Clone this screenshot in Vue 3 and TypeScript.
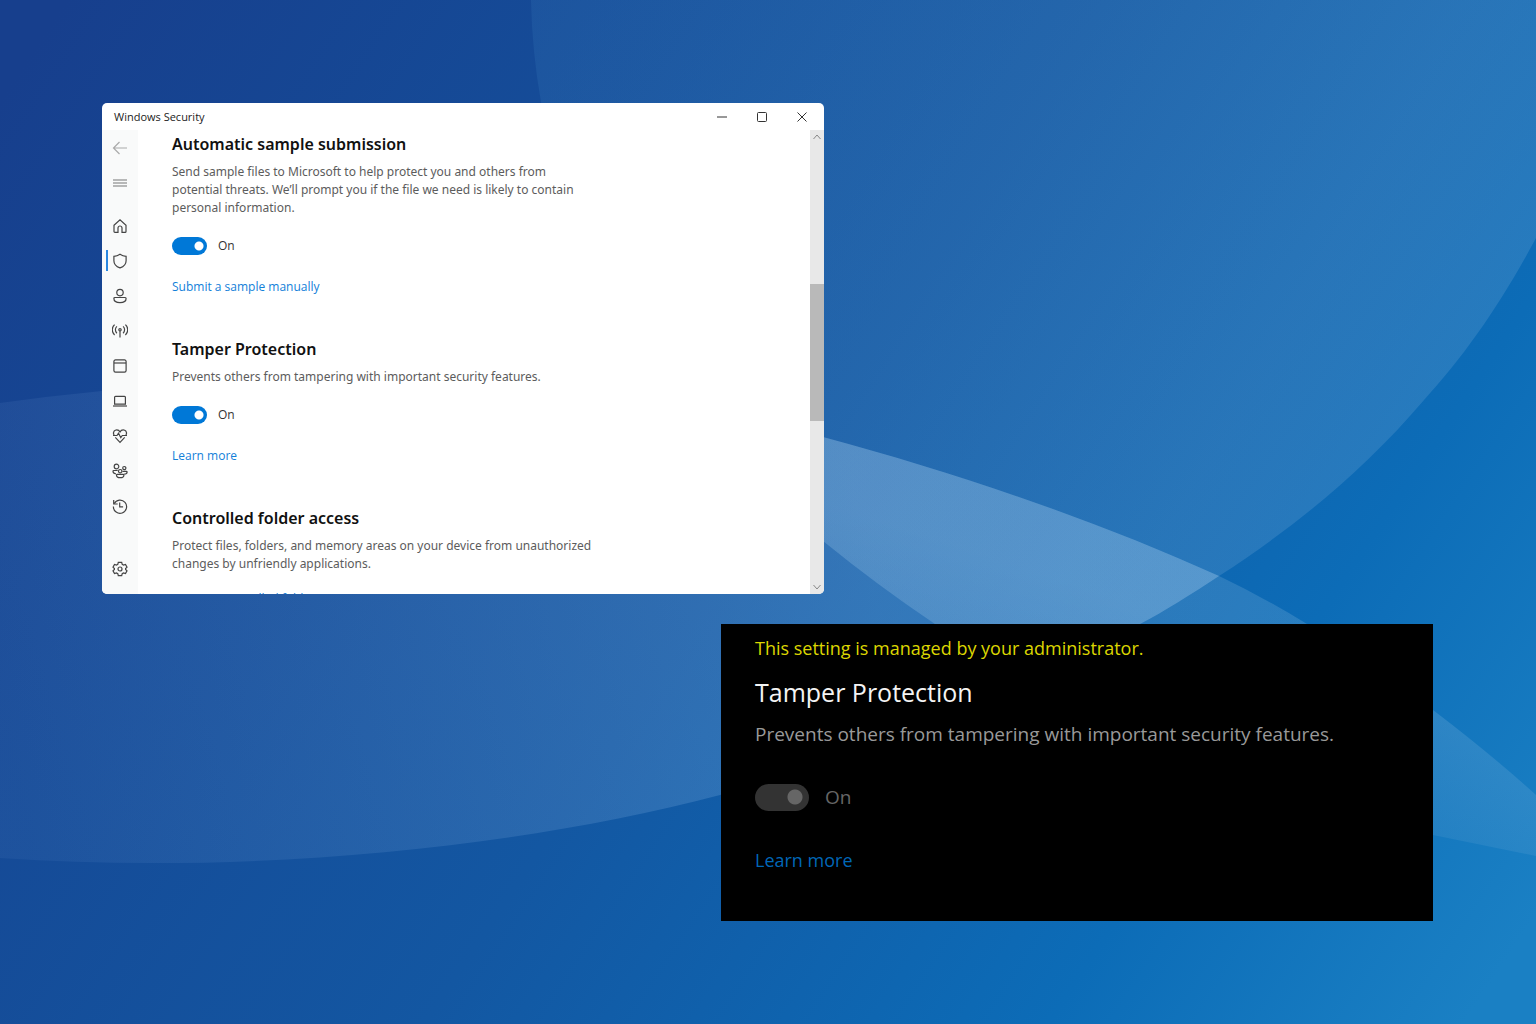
<script setup lang="ts">
import { ref } from 'vue'

interface NavItem {
  name: string
  paths: string[]
}

const nav: NavItem[] = [
  { name: 'Home', paths: ['M2 7.2 8 1.7l6 5.5v6.3a.9.9 0 0 1-.9.9H10V10a2 2 0 0 0-4 0v4.400H2.900a.9.9 0 0 1-.9-.9z'] },
  { name: 'Virus & threat protection', paths: ['M8 1.300C6 2.700 4.200 3.300 1.900 3.400v4.300c0 3.500 2.300 5.800 6.100 7.200 3.800-1.400 6.100-3.700 6.100-7.200V3.400C11.800 3.300 10 2.700 8 1.300z'] },
  { name: 'Account protection', paths: ['M11.200 4.600a3.200 3.200 0 1 1-6.400 0 3.200 3.200 0 0 1 6.400 0z', 'M2.900 9.500h10.200a1 1 0 0 1 1 1c0 2.700-2.500 4.200-6.100 4.200s-6.100-1.500-6.100-4.200a1 1 0 0 1 1-1z'] },
  { name: 'Firewall & network protection', paths: ['M8 7.500V14.500', 'M9.200 6.800a1.200 1.200 0 1 1-2.400 0 1.200 1.200 0 0 1 2.400 0z', 'M4.900 10.200a4.600 4.600 0 0 1 0-6.800M11.100 10.200a4.600 4.600 0 0 0 0-6.800M2.600 12a7 7 0 0 1 0-10.400M13.400 12a7 7 0 0 0 0-10.400'] },
  { name: 'App & browser control', paths: ['M3.500 1.900h9a1.600 1.600 0 0 1 1.600 1.600v9a1.600 1.600 0 0 1-1.600 1.600h-9a1.600 1.600 0 0 1-1.600-1.600v-9a1.600 1.600 0 0 1 1.600-1.600z', 'M2 5h12'] },
  { name: 'Device security', paths: ['M3.500 3.400h9a.9.9 0 0 1 .9.9v6.900H2.600V4.300a.9.9 0 0 1 .9-.9z', 'M1 13h14'] },
  { name: 'Device performance & health', paths: ['M2 7.200C.3 3.700 3 1.900 4.800 1.900c1.500 0 2.600.8 3.200 2 .6-1.200 1.700-2 3.200-2C13 1.900 15.700 3.700 14 7.200', 'M1 7.500h4l1.500-2.300 2.300 4.500 1.500-2.200H15', 'M3.300 9.300 8 14.300l4.700-5'] },
  { name: 'Family options', paths: ['M6.800 3.500a2.300 2.300 0 1 1-4.600 0 2.300 2.300 0 0 1 4.600 0z', 'M13.900 5.100a1.600 1.600 0 1 1-3.200 0 1.600 1.600 0 0 1 3.200 0z', 'M9.900 8.200a1.700 1.700 0 1 1-3.400 0 1.700 1.700 0 0 1 3.400 0z', 'M5.700 7.500H1.800c-.5 0-.8.3-.8.8 0 1.300.9 2.300 2.900 2.500M10.500 8.300h3.800c.5 0 .8.300.8.700 0 1.300-.9 2.200-2.900 2.200', 'M5.300 11.400h5.800c.5 0 .8.300.8.800 0 1.500-1.400 2.500-3.700 2.500s-3.700-1-3.700-2.500c0-.5.3-.8.800-.8z'] },
  { name: 'Protection history', paths: ['M1.700 2v4h4', 'M2.200 5.600A6.600 6.600 0 1 1 1.400 8.600', 'M7.700 4.600v4.200h3.400'] },
]

const active = ref(1)
const sampleOn = ref(true)
const tamperOn = ref(true)
</script>

<template>
  <main class="desktop">
    <svg class="wallpaper" viewBox="0 0 1536 1024" preserveAspectRatio="none" aria-hidden="true">
      <defs>
        <linearGradient id="base" gradientUnits="userSpaceOnUse" x1="0" y1="100" x2="1440" y2="1060">
          <stop offset="0" stop-color="#173f8d" />
          <stop offset="0.5" stop-color="#1357a2" />
          <stop offset="0.8" stop-color="#0c6cb7" />
          <stop offset="1" stop-color="#1a80c4" />
        </linearGradient>
        <linearGradient id="top-veil" gradientUnits="userSpaceOnUse" x1="540" y1="0" x2="1240" y2="400">
          <stop offset="0" stop-color="#5fb4e6" stop-opacity="0.1" />
          <stop offset="1" stop-color="#96bee1" stop-opacity="0.19" />
        </linearGradient>
        <linearGradient id="left-veil" gradientUnits="userSpaceOnUse" x1="0" y1="700" x2="860" y2="520">
          <stop offset="0" stop-color="#82aae1" stop-opacity="0.08" />
          <stop offset="1" stop-color="#96c3eb" stop-opacity="0.26" />
        </linearGradient>
        <linearGradient id="right-veil" gradientUnits="userSpaceOnUse" x1="1480" y1="720" x2="1430" y2="870">
          <stop offset="0" stop-color="#a0c8e6" stop-opacity="0.2" />
          <stop offset="1" stop-color="#96bee1" stop-opacity="0.09" />
        </linearGradient>
        <clipPath id="above"><path d="M0 0H1536V238C1500 305 1465 355 1424 400C1360 475 1290 530 1219 576C1190 595 1165 611 1140 624C1010 702 865 760 720 795C520 848 250 875 0 858Z" /></clipPath>
        <clipPath id="below"><path d="M0 403Q50 396 102 391C340 360 590 370 823 437C960 474 1095 520 1219 576Q1265 598 1307 624Q1372 662 1433 710Q1492 755 1536 795V1024H0Z" /></clipPath>
      </defs>
      <rect width="1536" height="1024" fill="url(#base)" />
      <g clip-path="url(#above)">
        <path fill="url(#top-veil)" d="M531 0Q532 51 541 102C580 285 670 430 823 541Q877 585 935 624C1090 725 1260 790 1433 835L1536 856V0Z" />
      </g>
      <g clip-path="url(#below)">
        <rect fill="url(#left-veil)" width="1536" height="1024" clip-path="url(#above)" />
        <path fill="url(#right-veil)" d="M531 0Q532 51 541 102C580 285 670 430 823 541Q877 585 935 624C1090 725 1260 790 1433 835L1536 856V0Z" />
      </g>
    </svg>

    <section class="window" aria-label="Windows Security">
      <header class="titlebar">
        <span class="app-name">Windows Security</span>
        <div class="controls">
          <button type="button" aria-label="Minimize"><svg viewBox="0 0 12 12"><path d="M1 6h10" /></svg></button>
          <button type="button" aria-label="Maximize"><svg viewBox="0 0 12 12"><rect x="1.500" y="1.500" width="9" height="9" rx="1" /></svg></button>
          <button type="button" aria-label="Close"><svg viewBox="0 0 12 12"><path d="m1.500 1.500 9 9m0-9-9 9" /></svg></button>
        </div>
      </header>
      <div class="body">
        <nav class="rail" aria-label="Sections">
          <button type="button" class="back" aria-label="Back"><svg viewBox="0 0 16 16"><path d="M15 8H1.500M7.500 2l-6 6 6 6" /></svg></button>
          <button type="button" class="menu" aria-label="Open navigation"><svg viewBox="0 0 16 16"><path d="M1 5h14M1 8h14M1 11h14" /></svg></button>
          <button
            v-for="(item, i) in nav"
            :key="item.name"
            type="button"
            :class="{ active: i === active }"
            :aria-label="item.name"
            @click="active = i"
          >
            <svg viewBox="0 0 16 16"><path v-for="d in item.paths" :key="d" :d="d" /></svg>
          </button>
          <button type="button" class="settings" aria-label="Settings">
            <svg viewBox="0 0 16 16">
              <path d="m6.300 1.400 3.400 0 .5 2 1.300.7 2-.6 1.500 2.700L13.600 7.500v1L15 9.800l-1.500 2.700-2-.6-1.300.7-.5 2H6.300l-.5-2-1.300-.7-2 .6L1 9.800l1.400-1.300v-1L1 6.200l1.500-2.700 2 .6 1.300-.7z" />
              <circle cx="8" cy="8" r="2" />
            </svg>
          </button>
        </nav>
        <div class="content">
          <section class="setting">
            <h2>Automatic sample submission</h2>
            <p>Send sample files to Microsoft to help protect you and others from<br />potential threats. We’ll prompt you if the file we need is likely to contain<br />personal information.</p>
            <label class="toggle"><input v-model="sampleOn" type="checkbox" role="switch" /><span>{{ sampleOn ? 'On' : 'Off' }}</span></label>
            <a href="#">Submit a sample manually</a>
          </section>
          <section class="setting">
            <h2>Tamper Protection</h2>
            <p>Prevents others from tampering with important security features.</p>
            <label class="toggle"><input v-model="tamperOn" type="checkbox" role="switch" /><span>{{ tamperOn ? 'On' : 'Off' }}</span></label>
            <a href="#">Learn more</a>
          </section>
          <section class="setting">
            <h2>Controlled folder access</h2>
            <p>Protect files, folders, and memory areas on your device from unauthorized<br />changes by unfriendly applications.</p>
            <a href="#" class="manage">Manage Controlled folder access</a>
          </section>
        </div>
        <div class="scrollbar" aria-hidden="true">
          <svg viewBox="0 0 10 10"><path d="m1.500 7 3.500-4 3.500 4" /></svg>
          <div class="track"><div class="thumb"></div></div>
          <svg viewBox="0 0 10 10"><path d="m1.500 3 3.500 4 3.500-4" /></svg>
        </div>
      </div>
    </section>

    <section class="panel" aria-label="Managed setting">
      <p class="notice">This setting is managed by your administrator.</p>
      <h2>Tamper Protection</h2>
      <p class="about">Prevents others from tampering with important security features.</p>
      <label class="toggle"><input type="checkbox" role="switch" checked disabled /><span>On</span></label>
      <a href="#">Learn more</a>
    </section>
  </main>
</template>

<style>
body {
  margin: 0;
}
</style>

<style scoped>
.desktop {
  position: relative;
  min-height: 100vh;
  overflow: hidden;
  background: #1357a2;
  font-family: "Open Sans", "Noto Sans", sans-serif;
}
.wallpaper {
  position: absolute;
  inset: 0;
  width: 100%;
  height: 100%;
}
h2,
p {
  margin: 0;
}
a {
  text-decoration: none;
}
button {
  padding: 0;
  border: 0;
  background: none;
}
button svg,
.scrollbar svg {
  display: block;
  fill: none;
  stroke: currentColor;
}

.window {
  position: absolute;
  top: 103px;
  left: 102px;
  width: 47%;
  height: 491px;
  display: flex;
  flex-direction: column;
  overflow: hidden;
  border-radius: 5px;
  background: #fff;
}
.titlebar {
  flex: none;
  height: 27px;
  display: flex;
  align-items: center;
  justify-content: space-between;
  padding: 0 16px 0 12px;
  color: #222;
}
.app-name {
  font-size: 11px;
  line-height: 16px;
}
.controls {
  display: flex;
  gap: 28px;
}
.controls button {
  color: #333;
}
.controls svg {
  width: 12px;
  height: 12px;
}
.body {
  flex: 1;
  min-height: 0;
  display: flex;
}
.rail {
  flex: none;
  width: 36px;
  display: flex;
  flex-direction: column;
  background: #f9fafa;
}
.rail button {
  flex: none;
  height: 35px;
  display: grid;
  place-items: center;
  color: #444;
}
.rail svg {
  width: 16px;
  height: 16px;
  stroke-width: 1.2;
}
.rail .back {
  color: #aaa;
}
.rail .menu {
  color: #777;
  margin-bottom: 8px;
}
.rail .active {
  background: linear-gradient(#2a87e0, #2a87e0) 4px center / 2px 21px no-repeat;
}
.rail .settings {
  margin: auto 0 8px;
}
.content {
  flex: 1;
  min-width: 0;
  padding: 2px 0 0 34px;
  overflow: hidden;
  font-size: 12px;
}
.setting {
  display: flex;
  flex-direction: column;
  align-items: flex-start;
  margin-bottom: 41px;
}
.setting h2 {
  font-family: "Noto Sans", sans-serif;
  font-size: 16px;
  line-height: 24px;
  font-weight: 600;
  color: #111;
  margin-bottom: 7px;
  white-space: nowrap;
}
.setting p {
  font-family: "Noto Sans", sans-serif;
  line-height: 18px;
  color: #5c5c5c;
  white-space: nowrap;
}
.setting a {
  line-height: 18px;
  color: #1280d9;
}
.toggle {
  display: flex;
  align-items: center;
}
.toggle input {
  appearance: none;
  margin: 0;
  border-radius: 99px;
}
.setting .toggle {
  gap: 11px;
  margin: 20px 0 23px;
  line-height: 18px;
  color: #333;
}
.setting input {
  width: 35px;
  height: 18px;
  background: radial-gradient(circle at 27px 9px, #fff 4px, transparent 5px) #0078d7;
}
.setting .manage {
  margin-top: 17px;
}
.scrollbar {
  flex: none;
  width: 14px;
  display: flex;
  flex-direction: column;
  align-items: center;
  gap: 3px;
  padding: 2px 0;
  background: #e8e8e8;
  color: #888;
}
.scrollbar svg {
  width: 10px;
  height: 10px;
}
.track {
  flex: 1;
  width: 100%;
}
.thumb {
  height: 137px;
  margin-top: 139px;
  background: #b9b9b9;
}

.panel {
  position: absolute;
  top: 624px;
  left: 721px;
  right: 103px;
  display: flex;
  flex-direction: column;
  align-items: flex-start;
  padding: 10px 34px 47px;
  background: #000;
  font-size: 19px;
  line-height: 28px;
  white-space: nowrap;
}
.panel .notice {
  font-size: 18px;
  color: #dcd600;
}
.panel h2 {
  margin: 12px 0 10px;
  font-size: 25px;
  line-height: 36px;
  font-weight: 400;
  color: #f4f4f4;
}
.panel .about {
  color: #999;
}
.panel .toggle {
  gap: 16px;
  margin: 35px 0;
  color: #666;
}
.panel input {
  width: 54px;
  height: 27px;
  background: radial-gradient(circle at 40px 13px, #666 7px, transparent 8px) #333;
}
.panel a {
  font-size: 18px;
  color: #0067b8;
}
</style>
